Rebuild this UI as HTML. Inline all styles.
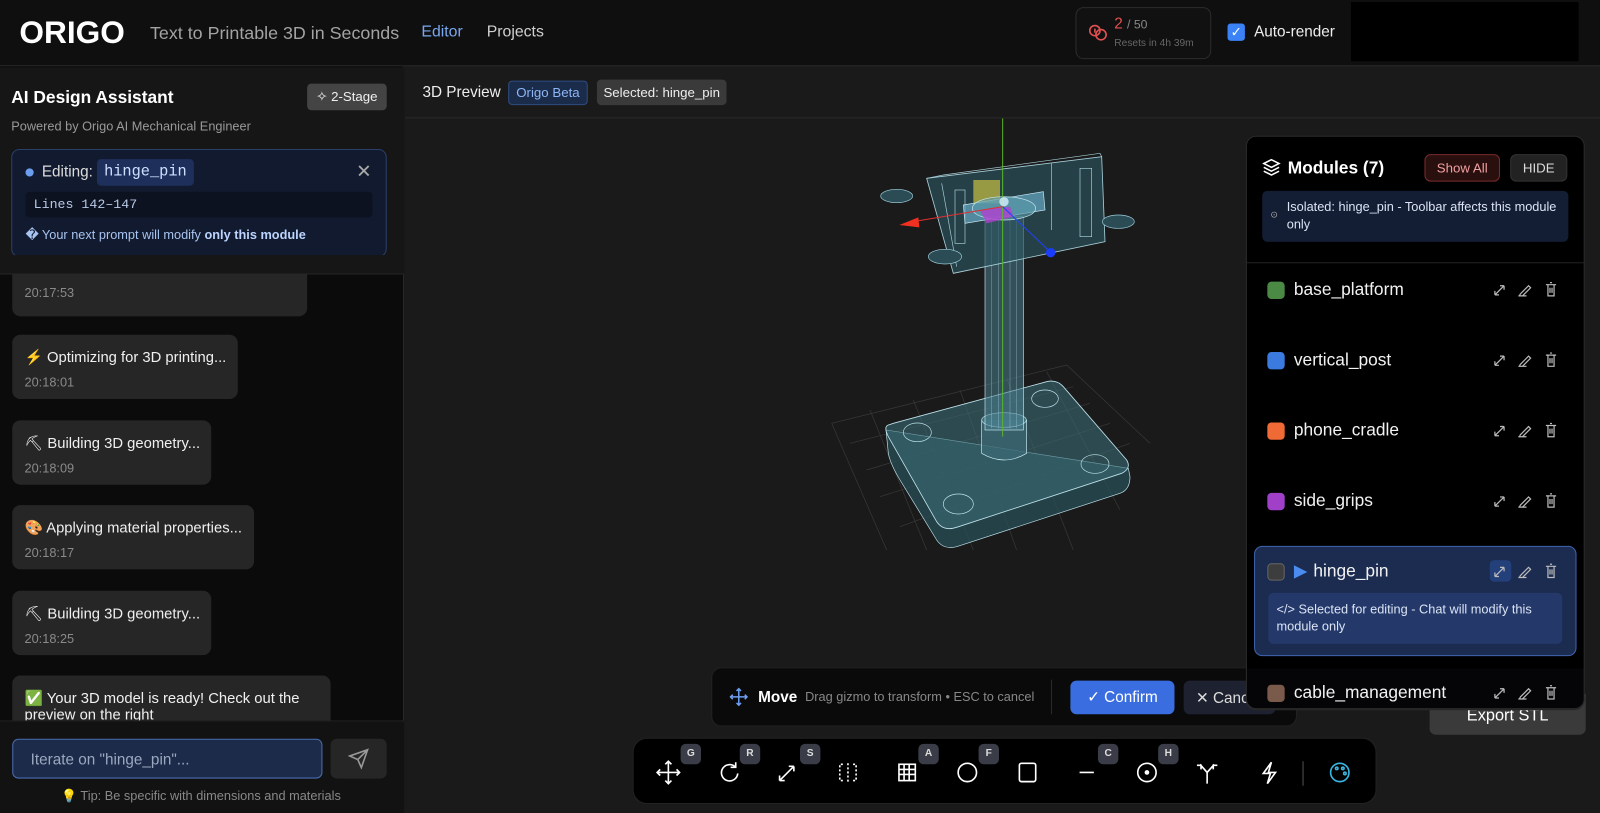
<!DOCTYPE html>
<html><head><meta charset="utf-8">
<style>
*{box-sizing:border-box;margin:0;padding:0}
body{width:1600px;height:813px;background:#1a1a1a;font-family:"Liberation Sans",sans-serif;color:#e5e5e5;position:relative;overflow:hidden}
#w{position:absolute;left:0;top:0;width:1568px;height:797px;transform:scale(1.0204);transform-origin:0 0}
.a{position:absolute;white-space:nowrap}
.hdr{left:0;top:0;width:1568px;height:65px;background:#0f0f0f;border-bottom:1px solid #2a2a2a}
.left{left:0;top:65px;width:396px;height:732px;background:#0b0b0b;border-right:1px solid #2a2a2a}
.msg{left:12px;background:#262626;border-radius:8px;padding:14px 12px;font-size:14.5px;color:#f0f0f0}
.msg .t{font-size:12.5px;color:#8a8a8a;margin-top:9px}
.mod{left:1242px;font-size:17px;color:#f2f2f2;display:flex;align-items:center}
.sw{width:17px;height:17px;border-radius:4px;margin-right:9px}
.key{width:20px;height:20px;background:#3a3d47;border-radius:5px;font-size:10px;font-weight:bold;color:#ddd;text-align:center;line-height:20px}
</style></head><body>
<svg style="position:absolute;left:800px;top:110px" width="350" height="440" viewBox="0 0 1050 1320">
<g stroke="#3a3a3a" stroke-width="2" fill="none">
<path d="M95 940L800 765L1050 1000M95 940L260 1320"/>
<path d="M150 1000L820 830M200 1080L870 880M240 1160L930 940M300 1250L990 1000M210 900L380 1320M340 870L520 1320M480 840L650 1320M620 805L820 1320M740 785L960 1200"/>
</g>
<path d="M258 960L265 1030Q270 1060 300 1110L410 1290Q430 1320 470 1310L960 1150Q990 1140 990 1100L985 1075Z" fill="#2a4f58" fill-opacity=".75" stroke="#bfe3ec" stroke-width="2"/>
<path d="M265 945Q250 950 265 980L410 1235Q430 1265 470 1252L965 1090Q995 1075 980 1050L790 830Q770 808 740 815L280 940Z" fill="#3a6a75" fill-opacity=".6" stroke="#bfe3ec" stroke-width="2.5"/>
<g fill="none" stroke="#bfe3ec" stroke-width="2"><ellipse cx="352" cy="967" rx="42" ry="28"/><ellipse cx="735" cy="866" rx="40" ry="26"/><ellipse cx="885" cy="1062" rx="42" ry="28"/><ellipse cx="475" cy="1182" rx="45" ry="30"/></g>
<path d="M545 930V1030Q612 1070 680 1030V930" fill="#3c6a75" fill-opacity=".7" stroke="#c8e8f0" stroke-width="2"/>
<ellipse cx="612" cy="930" rx="67" ry="22" fill="#4a8090" fill-opacity=".6" stroke="#c8e8f0" stroke-width="2"/>
<rect x="555" y="320" width="115" height="640" fill="#4a8090" fill-opacity=".55" stroke="#c8e8f0" stroke-width="2"/>
<path d="M575 330V955M595 330V955M630 330V955M650 330V955" stroke="#a8d0da" stroke-width="1"/>
<path d="M380 205L905 140L915 395L460 490Z" fill="#2c5560" fill-opacity=".65" stroke="#a8d0da" stroke-width="2.5"/>
<path d="M380 205L430 195L900 130L905 140" fill="none" stroke="#a8d0da" stroke-width="2"/>
<g fill="none" stroke="#a8d0da" stroke-width="2"><rect x="465" y="240" width="30" height="160"/><rect x="840" y="175" width="35" height="205"/><path d="M425 220L470 470M755 160V360"/></g>
<g fill="#2b4b55" stroke="#9ecfdc" stroke-width="2"><ellipse cx="290" cy="258" rx="48" ry="20"/><ellipse cx="955" cy="335" rx="48" ry="20"/><ellipse cx="435" cy="440" rx="50" ry="22"/></g>
<rect x="520" y="210" width="80" height="70" fill="#c8c040" fill-opacity=".7"/>
<path d="M490 285L730 245L735 300L495 340Z" fill="#6ab0d0" fill-opacity=".65" stroke="#c8e8f0" stroke-width="2"/>
<ellipse cx="612" cy="295" rx="95" ry="35" fill="#5a9aa8" fill-opacity=".6" stroke="#c8e8f0" stroke-width="2"/>
<path d="M540 300L630 290L640 320L560 340Z" fill="#b040d0" fill-opacity=".8"/>
<path d="M608 20V980" stroke="#5ab82a" stroke-width="3"/>
<path d="M608 290L340 335" stroke="#e03030" stroke-width="3"/><path d="M298 345L355 322L358 352Z" fill="#f03020"/>
<path d="M608 290L750 425" stroke="#2040ff" stroke-width="3"/><circle cx="752" cy="428" r="14" fill="#1a3cff"/>
<circle cx="612" cy="275" r="14" fill="#d8f0ff" fill-opacity=".8"/>
</svg>
<div id="w">
<div class="a hdr"></div>
<div class="a" style="left:19px;top:14px;font-size:31px;font-weight:bold;color:#fff">ORIGO</div>
<div class="a" style="left:147px;top:22px;font-size:17.5px;color:#a3a3a3">Text to Printable 3D in Seconds</div>
<div class="a" style="left:413px;top:23px;font-size:15.5px;color:#7aa7f0">Editor</div>
<div class="a" style="left:477px;top:23px;font-size:15.5px;color:#d0d0d0">Projects</div>
<div class="a" style="left:1054px;top:7px;width:133px;height:51px;border:1px solid #2c2c2c;border-radius:8px;background:#111"></div>
<svg class="a" style="left:1066px;top:23px" width="20" height="18" viewBox="0 0 20 18" fill="none" stroke="#e05050" stroke-width="1.6"><circle cx="7" cy="7" r="5"/><circle cx="13" cy="11" r="5"/><path d="M7 5v4"/></svg>
<div class="a" style="left:1092px;top:15px;font-size:15px;color:#e05050">2 <span style="color:#888;font-size:12px">/ 50</span></div>
<div class="a" style="left:1092px;top:37px;font-size:10px;color:#666">Resets in 4h 39m</div>
<div class="a" style="left:1203px;top:23px;width:17px;height:17px;background:#3b82f6;border-radius:3px;color:#fff;font-size:13px;text-align:center;line-height:17px">✓</div>
<div class="a" style="left:1229px;top:23px;font-size:15px;color:#eee">Auto-render</div>
<div class="a" style="left:1324px;top:2px;width:223px;height:58px;background:#000"></div>

<div class="a left"></div>
<div class="a" style="left:0;top:66px;width:396px;height:203px;background:#161616;border-bottom:1px solid #262626"></div>
<div class="a" style="left:11px;top:86px;font-size:17px;font-weight:bold;color:#fff">AI Design Assistant</div>
<div class="a" style="left:301px;top:82px;width:78px;height:26px;background:#444;border-radius:4px;font-size:13px;color:#eee;text-align:center;line-height:26px">✧ 2-Stage</div>
<div class="a" style="left:11px;top:117px;font-size:12.5px;color:#999">Powered by Origo AI Mechanical Engineer</div>
<div class="a" style="left:11px;top:146px;width:368px;height:106px;background:#111a2e;border:1px solid #2b3f6b;border-radius:8px"></div>
<div class="a" style="left:25px;top:165px;width:8px;height:8px;border-radius:50%;background:#6c9ef0"></div>
<div class="a" style="left:41px;top:160px;font-size:15px;color:#ddd">Editing:</div>
<div class="a" style="left:95px;top:156px;width:95px;height:26px;background:#1e2f5c;border-radius:4px;font-family:'Liberation Mono',monospace;font-size:15px;color:#cfe0ff;text-align:center;line-height:26px">hinge_pin</div>
<div class="a" style="left:349px;top:158px;font-size:18px;color:#aaa">✕</div>
<div class="a" style="left:25px;top:188px;width:340px;height:25px;background:#0c1220;border-radius:4px;font-family:'Liberation Mono',monospace;font-size:13px;color:#b8c8e8;padding:5px 8px">Lines 142–147</div>
<div class="a" style="left:25px;top:222px;font-size:12.5px;color:#a8c4f0">� Your next prompt will modify <b style="color:#bcd4ff">only this module</b></div>

<div class="a msg" style="top:250px;width:289px;height:60px;padding-top:8px"><div class="t" style="margin-top:22px">20:17:53</div></div>
<div class="a" style="left:0;top:250px;width:396px;height:19px;background:#161616;border-bottom:1px solid #262626"></div>
<div class="a msg" style="top:328px;width:221px;height:63px">⚡ Optimizing for 3D printing...<div class="t">20:18:01</div></div>
<div class="a msg" style="top:412px;width:195px;height:63px">⛏ Building 3D geometry...<div class="t">20:18:09</div></div>
<div class="a msg" style="top:495px;width:237px;height:63px">🎨 Applying material properties...<div class="t">20:18:17</div></div>
<div class="a msg" style="top:579px;width:195px;height:63px">⛏ Building 3D geometry...<div class="t">20:18:25</div></div>
<div class="a msg" style="top:662px;width:312px;height:60px">✅ Your 3D model is ready! Check out the<br>preview on the right</div>
<div class="a" style="left:0;top:706px;width:396px;height:91px;background:#121212;border-top:1px solid #222"></div>
<div class="a" style="left:12px;top:724px;width:304px;height:39px;background:#1d2b4a;border:1px solid #4a6db0;border-radius:6px;font-size:15px;color:#9aa8c0;padding:11px 17px">Iterate on "hinge_pin"...</div>
<div class="a" style="left:324px;top:724px;width:55px;height:39px;background:#262626;border-radius:6px"></div>
<svg class="a" style="left:341px;top:733px" width="21" height="21" viewBox="0 0 24 24" fill="none" stroke="#999" stroke-width="1.8"><path d="M22 2L11 13M22 2l-7 20-4-9-9-4z"/></svg>
<div class="a" style="left:60px;top:773px;font-size:12.5px;color:#888">💡 Tip: Be specific with dimensions and materials</div>

<div class="a" style="left:397px;top:66px;width:1171px;height:50px;background:#1a1a1a;border-bottom:1px solid #2a2a2a"></div>
<div class="a" style="left:414px;top:82px;font-size:15px;color:#eee">3D Preview</div>
<div class="a" style="left:498px;top:79px;width:78px;height:24px;background:#1b2c4b;border:1px solid #2e4c80;border-radius:4px;font-size:13px;color:#8db5f5;text-align:center;line-height:22px">Origo Beta</div>
<div class="a" style="left:585px;top:78px;width:127px;height:25px;background:#3a3a3a;border-radius:4px;font-size:13px;color:#eee;text-align:center;line-height:25px">Selected: hinge_pin</div>

<div class="a" style="left:697px;top:654px;width:574px;height:58px;background:#0a0a0a;border:1px solid #222;border-radius:10px"></div>
<svg class="a" style="left:713px;top:672px" width="22" height="22" viewBox="0 0 30 30" fill="none" stroke="#6c9ef0" stroke-width="2"><path d="M15 4v22M4 15h22M12 7l3-3 3 3M12 23l3 3 3-3M7 12l-3 3 3 3M23 12l3 3-3 3"/></svg>
<div class="a" style="left:743px;top:675px;font-size:15px;font-weight:bold;color:#fff">Move</div>
<div class="a" style="left:789px;top:676px;font-size:12.5px;color:#888">Drag gizmo to transform • ESC to cancel</div>
<div class="a" style="left:1030px;top:666px;width:1px;height:34px;background:#2a2a2a"></div>
<div class="a" style="left:1049px;top:667px;width:102px;height:33px;background:#3a6ee0;border-radius:6px;font-size:15px;color:#fff;text-align:center;line-height:33px">✓ Confirm</div>
<div class="a" style="left:1160px;top:667px;width:90px;height:33px;background:#1e2230;border-radius:6px;font-size:15px;color:#ddd;padding:8px 12px;overflow:hidden">✕ Cancel</div>

<div class="a" style="left:1401px;top:680px;width:153px;height:40px;background:#3a3a3a;border-radius:0 0 6px 6px;font-size:16px;color:#fff;text-align:center;padding-top:13px">Export STL</div>
<div class="a" style="left:1221px;top:133px;width:332px;height:563px;background:#000;border:1px solid #2b2b2b;border-radius:10px"></div>
<svg class="a" style="left:1237px;top:155px" width="18" height="18" viewBox="0 0 24 24" fill="none" stroke="#fff" stroke-width="2"><path d="M12 2L2 7l10 5 10-5z M2 12l10 5 10-5 M2 17l10 5 10-5"/></svg>
<div class="a" style="left:1262px;top:155px;font-size:17px;font-weight:bold;color:#fff">Modules (7)</div>
<div class="a" style="left:1396px;top:151px;width:74px;height:27px;background:#2a0f0f;border:1px solid #7a2c2c;border-radius:6px;font-size:13px;color:#f0a0a0;text-align:center;line-height:25px">Show All</div>
<div class="a" style="left:1480px;top:151px;width:56px;height:27px;background:#222;border:1px solid #333;border-radius:6px;font-size:13px;color:#ddd;text-align:center;line-height:25px">HIDE</div>
<div class="a" style="left:1237px;top:187px;width:300px;height:50px;background:#131d33;border-radius:5px;font-size:12.5px;color:#dbe4f5;padding:8px 8px 0 24px;line-height:17px;white-space:normal">Isolated: hinge_pin - Toolbar affects this module only</div>
<div class="a" style="left:1245px;top:205px;font-size:9px;color:#aaa">⊙</div>
<div class="a" style="left:1222px;top:257px;width:330px;height:1px;background:#222"></div>

<div class="a mod" style="top:274px"><div class="sw" style="background:#4a8a45"></div>base_platform</div>
<div class="a mod" style="top:343px"><div class="sw" style="background:#3b7be0"></div>vertical_post</div>
<div class="a mod" style="top:412px"><div class="sw" style="background:#f06a35"></div>phone_cradle</div>
<div class="a mod" style="top:481px"><div class="sw" style="background:#a040c8"></div>side_grips</div>
<div class="a" style="left:1229px;top:535px;width:316px;height:108px;background:#1b2c50;border:1px solid #3f64b0;border-radius:8px"></div>
<div class="a mod" style="top:550px"><div class="sw" style="background:#3d3d3d;border:1px solid #666"></div><span style="color:#4a8cf0;margin-right:6px">▶</span>hinge_pin</div>
<div class="a" style="left:1460px;top:549px;width:21px;height:21px;background:#24407a;border-radius:4px"></div>
<div class="a" style="left:1243px;top:581px;width:288px;height:50px;background:#24396a;border-radius:5px;font-size:12.5px;color:#dbe4f5;padding:8px;line-height:17px;white-space:normal">&lt;/&gt; Selected for editing - Chat will modify this module only</div>
<div class="a" style="left:1221px;top:655px;width:332px;height:40px;background:#050508;border-radius:0 0 10px 10px;border:1px solid #2b2b2b;border-top:none"></div>
<div class="a mod" style="top:669px"><div class="sw" style="background:#7a5a4a"></div>cable_management</div>
<svg class="a" style="left:1462px;top:270px" width="68" height="420" viewBox="0 0 68 420" fill="none" stroke="#bbb" stroke-width="1.2">
<g id="ic"><path d="M3 19l9-9M3 19v-4M3 19h4M12 10h-4M12 10v4"/><path d="M28 18l8-8 2 2-8 8h-3z M26 20h8"/><path d="M53 9h10M55 9v11h6V9M57 7h2M57 12v5M59 12v5"/></g>
<use href="#ic" y="69"/><use href="#ic" y="138"/><use href="#ic" y="207"/><use href="#ic" y="276"/><use href="#ic" y="395"/>
</svg>

<div class="a" style="left:620px;top:723px;width:729px;height:65px;background:#000;border:1px solid #222;border-radius:14px"></div>
<div class="a key" style="left:667px;top:729px">G</div><div class="a key" style="left:725px;top:729px">R</div><div class="a key" style="left:784px;top:729px">S</div><div class="a key" style="left:900px;top:729px">A</div><div class="a key" style="left:959px;top:729px">F</div><div class="a key" style="left:1076px;top:729px">C</div><div class="a key" style="left:1135px;top:729px">H</div>
<svg class="a" style="left:640px;top:742px" width="700" height="30" viewBox="0 0 700 30" fill="none" stroke="#fff" stroke-width="1.6">
<path d="M15 4v22M4 15h22M12 7l3-3 3 3M12 23l3 3 3-3M7 12l-3 3 3 3M23 12l3 3-3 3"/>
<path d="M81 10a8 8 0 1 0 2 6M81 5v5h-5"/>
<path d="M124 23l14-14M124 23v-5M124 23h5M138 9h-5M138 9v5"/>
<path d="M186 7h-3v16h3M196 7h3v16h-3M191 6v18" stroke-dasharray="2 2"/>
<rect x="241" y="7" width="16" height="16"/><path d="M241 12h16M241 17h16M246 7v16M251 7v16"/>
<circle cx="308" cy="15" r="9"/>
<rect x="359" y="6" width="16" height="18" rx="2"/>
<path d="M418 15h14"/>
<circle cx="484" cy="15" r="9"/><circle cx="484" cy="15" r="1.5" fill="#fff"/>
<path d="M543 26V15l-7-8M543 15l7-8M533 8h4v4M553 8h-4v4"/>
<path d="M606 5l-8 11h7l-3 10 8-11h-7z"/>
<path d="M637 4v24" stroke="#333"/>
<circle cx="673" cy="15" r="9" stroke="#3ab4e0"/><circle cx="670" cy="11" r="1.2" stroke="#3ab4e0"/><circle cx="676" cy="11" r="1.2" stroke="#3ab4e0"/><circle cx="678" cy="16" r="1.2" stroke="#3ab4e0"/>
</svg>
</div>
</body></html>
